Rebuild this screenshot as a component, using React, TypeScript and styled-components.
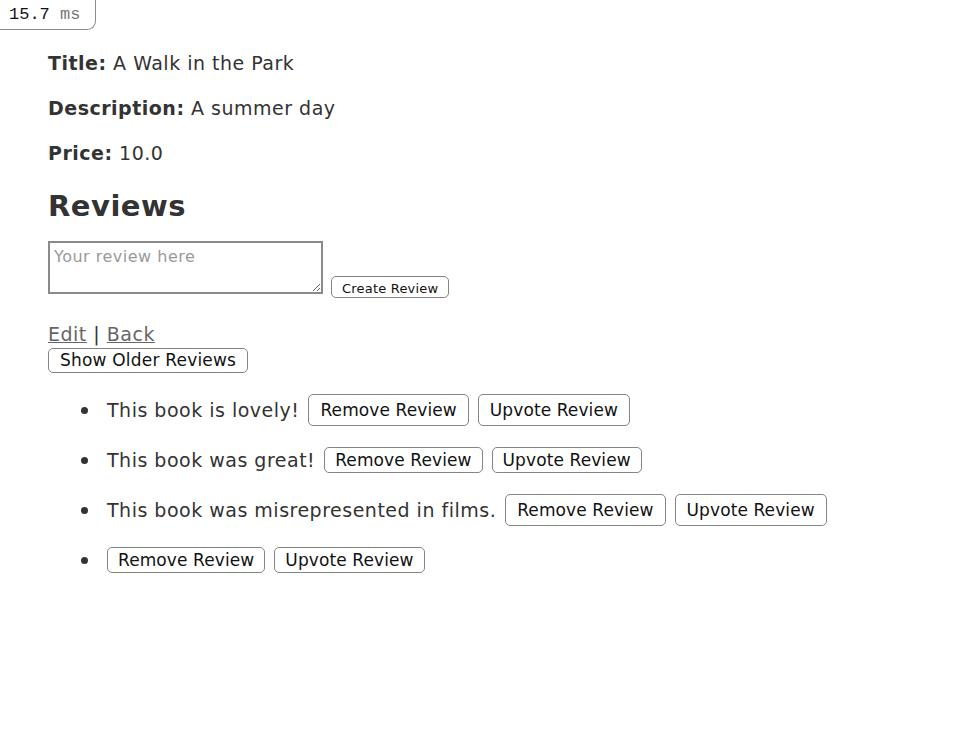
import React from "react";
import styled, { createGlobalStyle } from "styled-components";

const Global = createGlobalStyle`
  html, body { margin: 0; padding: 0; background: #fff; }
  body { font-family: "DejaVu Sans", Verdana, sans-serif; color: #333; }
`;

const Badge = styled.div`
  position: absolute;
  top: 0;
  left: 0;
  width: 96px;
  height: 30px;
  box-sizing: border-box;
  border-right: 1px solid #8c8c8c;
  border-bottom: 1px solid #8c8c8c;
  border-bottom-right-radius: 9px;
  font-family: "Liberation Mono", "Courier New", monospace;
  font-size: 17px;
  line-height: 30px;
  padding-left: 9px;
  color: #111;
  background: #fff;
`;

const Unit = styled.span`
  color: #777;
`;

const Page = styled.main`
  padding: 50px 0 0 48px;
`;

const Field = styled.p`
  margin: 0 0 18px;
  font-size: 19px;
  letter-spacing: 0.5px;
  line-height: 27px;
`;

const Label = styled.strong`
  font-weight: bold;
`;

const Heading = styled.h2`
  margin: 22px 0 18px;
  font-size: 29px;
  letter-spacing: 0.5px;
  line-height: 34px;
  font-weight: bold;
`;

const Form = styled.form`
  display: flex;
  align-items: flex-end;
  gap: 8px;
`;

const TextArea = styled.textarea`
  width: 275px;
  height: 53px;
  box-sizing: border-box;
  margin: 0 0 4px;
  border: 2px solid #8a8a8a;
  padding: 4px 4px;
  font-family: "DejaVu Sans", Verdana, sans-serif;
  font-size: 16px;
  letter-spacing: 0.5px;
  color: #333;
  resize: both;
  &::placeholder { color: #9a9a9a; }
`;

const Button = styled.button<{ $size?: "small" | "tall" | "normal" }>`
  box-sizing: border-box;
  background: #fff;
  color: #111;
  border: 1px solid #858585;
  border-radius: 5px;
  font-family: "DejaVu Sans", Verdana, sans-serif;
  font-size: ${(p) => (p.$size === "small" ? "13px" : "17px")};
  letter-spacing: ${(p) => (p.$size === "small" ? "0.2px" : "0.1px")};
  line-height: 1;
  padding: ${(p) =>
    p.$size === "small" ? "5px 10px 2px" : p.$size === "tall" ? "6px 11px" : "3px 10px"};
  height: ${(p) => (p.$size === "small" ? "22px" : p.$size === "tall" ? "32px" : "26px")};
  white-space: nowrap;
  cursor: pointer;
`;

const Links = styled.div`
  margin-top: 23px;
  font-size: 19px;
  letter-spacing: 0.5px;
  line-height: 27px;
`;

const Link = styled.a`
  color: #666;
  text-decoration: underline;
`;

const Sep = styled.span`
  color: #333;
`;

const OlderButton = styled(Button)`
  display: block;
  height: 25px;
  padding: 2px 11px;
  font-size: 17px;
  letter-spacing: 0.2px;
`;

const List = styled.ul`
  margin: 21px 0 0;
  padding-left: 59px;
  list-style: none;
  font-size: 19px;
  letter-spacing: 0.5px;
`;

const Item = styled.li`
  position: relative;
  margin-bottom: 21px;
  &::before {
    content: "";
    position: absolute;
    left: -26px;
    top: 50%;
    width: 7px;
    height: 7px;
    margin-top: -3px;
    border-radius: 50%;
    background: #333;
  }
`;

const ItemRow = styled.div<{ $tall?: boolean }>`
  display: flex;
  align-items: center;
  gap: 9px;
  height: ${(p) => (p.$tall ? "32px" : "26px")};
`;

const ReviewText = styled.span`
  line-height: 24px;
`;

const reviews = [
  { text: "This book is lovely!", tall: true },
  { text: "This book was great!", tall: false },
  { text: "This book was misrepresented in films.", tall: true },
  { text: "", tall: false },
];

export default function App() {
  return (
    <>
      <Global />
      <Badge>
        15.7 <Unit>ms</Unit>
      </Badge>
      <Page>
        <Field>
          <Label>Title:</Label> A Walk in the Park
        </Field>
        <Field>
          <Label>Description:</Label> A summer day
        </Field>
        <Field>
          <Label>Price:</Label> 10.0
        </Field>
        <Heading>Reviews</Heading>
        <Form onSubmit={(e) => e.preventDefault()}>
          <TextArea placeholder="Your review here" />
          <Button $size="small" type="submit">Create Review</Button>
        </Form>
        <Links>
          <Link href="#">Edit</Link> <Sep>|</Sep> <Link href="#">Back</Link>
        </Links>
        <OlderButton type="button">Show Older Reviews</OlderButton>
        <List>
          {reviews.map((r, i) => (
            <Item key={i}>
              <ItemRow $tall={r.tall}>
                {r.text && <ReviewText>{r.text}</ReviewText>}
                <Button type="button" $size={r.tall ? "tall" : "normal"}>Remove Review</Button>
                <Button type="button" $size={r.tall ? "tall" : "normal"}>Upvote Review</Button>
              </ItemRow>
            </Item>
          ))}
        </List>
      </Page>
    </>
  );
}
